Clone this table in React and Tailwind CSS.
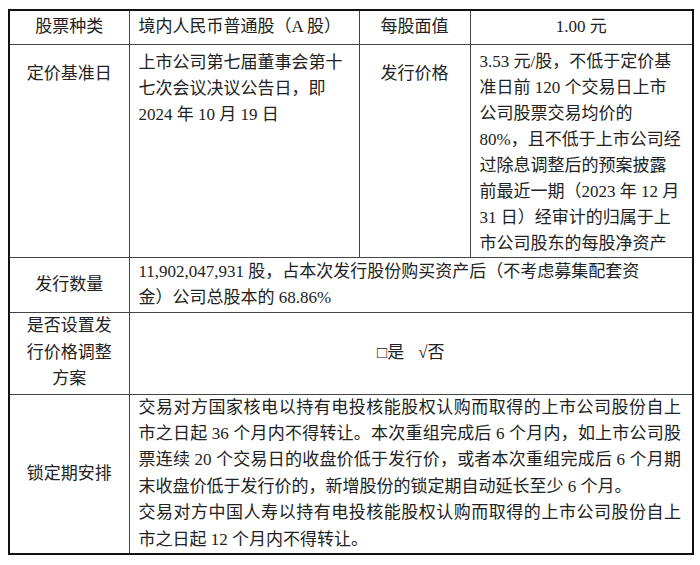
import React from "react";

const font = { fontFamily: '"Liberation Serif", "Noto Sans CJK SC", serif' };

// lines as laid out in the source document
const basePriceLines = ["上市公司第七届董事会第十", "七次会议决议公告日，即", "2024 年 10 月 19 日"];

const priceLines = [
  "3.53 元/股，不低于定价基",
  "准日前 120 个交易日上市",
  "公司股票交易均价的",
  "80%，且不低于上市公司经",
  "过除息调整后的预案披露",
  "前最近一期（2023 年 12 月",
  "31 日）经审计的归属于上",
  "市公司股东的每股净资产",
];

const lockLines = [
  { text: "交易对方国家核电以持有电投核能股权认购而取得的上市公司股份自上", justify: true },
  { text: "市之日起 36 个月内不得转让。本次重组完成后 6 个月内，如上市公司股", justify: true },
  { text: "票连续 20 个交易日的收盘价低于发行价，或者本次重组完成后 6 个月期", justify: true },
  { text: "末收盘价低于发行价的，新增股份的锁定期自动延长至少 6 个月。", justify: false },
  { text: "交易对方中国人寿以持有电投核能股权认购而取得的上市公司股份自上", justify: true },
  { text: "市之日起 12 个月内不得转让。", justify: false },
];

const cell = "border border-[#444] px-[9px] text-[17px]";

const App = () => {
  return (
    <div className="bg-white w-[700px] h-[565px] pt-[9px] pl-[8px] text-[#222]" style={font}>
      <table className="table-fixed border-collapse border-2 border-[#111] w-[684px]">
        <colgroup>
          <col className="w-[120px]" />
          <col className="w-[230px]" />
          <col className="w-[111px]" />
          <col className="w-[223px]" />
        </colgroup>
        <tbody>
          <tr className="h-[34px]">
            <td className={`${cell} text-center leading-[26px]`}>股票种类</td>
            <td className={`${cell} leading-[26px] whitespace-nowrap`}>境内人民币普通股（A 股）</td>
            <td className={`${cell} text-center leading-[26px]`}>每股面值</td>
            <td className={`${cell} text-center leading-[26px]`}>1.00 元</td>
          </tr>

          <tr className="h-[211px]">
            <td className={`${cell} align-top text-center pt-[16px] leading-[26px]`}>定价基准日</td>
            <td className={`${cell} align-top pt-[5px] leading-[26px]`}>
              {basePriceLines.map((line) => (
                <div key={line} className="whitespace-nowrap">
                  {line}
                </div>
              ))}
            </td>
            <td className={`${cell} align-top text-center pt-[16px] leading-[26px]`}>发行价格</td>
            <td className={`${cell} align-top pt-[4px] pb-0 leading-[26px]`}>
              {priceLines.map((line) => (
                <div key={line} className="whitespace-nowrap">
                  {line}
                </div>
              ))}
            </td>
          </tr>

          <tr className="h-[55px]">
            <td className={`${cell} text-center leading-[26px]`}>发行数量</td>
            <td colSpan={3} className={`${cell} leading-[25.5px]`}>
              <div className="whitespace-nowrap">11,902,047,931 股，占本次发行股份购买资产后（不考虑募集配套资</div>
              <div className="whitespace-nowrap">金）公司总股本的 68.86%</div>
            </td>
          </tr>

          <tr className="h-[82px]">
            <td className={`${cell} text-center leading-[26.5px]`}>
              <div>是否设置发</div>
              <div>行价格调整</div>
              <div>方案</div>
            </td>
            <td colSpan={3} className={`${cell} text-center leading-[26px]`}>
              <span>□是</span>
              <span className="ml-[14px]">√否</span>
            </td>
          </tr>

          <tr className="h-[158px]">
            <td className={`${cell} text-center leading-[26px]`}>锁定期安排</td>
            <td colSpan={3} className={`${cell} pr-[11px] py-0 leading-[26.4px]`}>
              {lockLines.map((line) => (
                <div
                  key={line.text}
                  className={line.justify ? "whitespace-nowrap text-justify [text-align-last:justify]" : "whitespace-nowrap"}
                >
                  {line.text}
                </div>
              ))}
            </td>
          </tr>
        </tbody>
      </table>
    </div>
  );
};

export default App;
